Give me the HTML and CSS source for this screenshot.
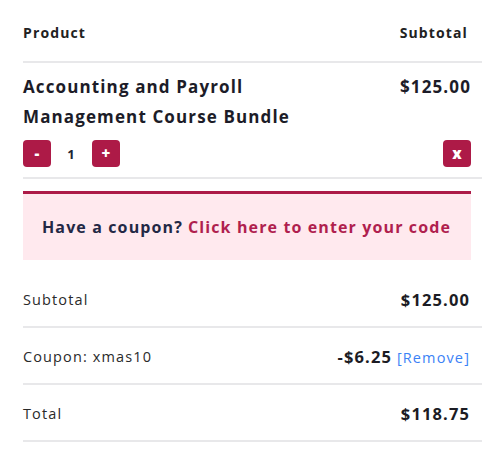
FILE: index.html
```html
<!DOCTYPE html>
<html>
	<head>
		<meta charset="UTF-8">
		<title>Cart</title>
		<link rel="stylesheet" href="styles.css">
	</head>
	<body>
		<div id="cart">
			<!--表头-->
			<div class="row head">
				<span>Product</span>
				<span class="right">Subtotal</span>
			</div>
			<!--商品-->
			<div class="item">
				<div class="item-top">
					<div class="item-name">Accounting and Payroll Management Course Bundle</div>
					<div class="item-price">$125.00</div>
				</div>
				<div class="item-ctrl">
					<div class="qty">
						<span class="btn">-</span>
						<span class="num">1</span>
						<span class="btn">+</span>
					</div>
					<span class="btn">x</span>
				</div>
			</div>
			<!--优惠券-->
			<div class="coupon">
				Have a coupon? <a href="#">Click here to enter your code</a>
			</div>
			<!--合计-->
			<div class="row total">
				<span>Subtotal</span>
				<span class="val">$125.00</span>
			</div>
			<div class="row total">
				<span>Coupon: xmas10</span>
				<span><b class="val">-$6.25</b> <a class="remove" href="#">[Remove]</a></span>
			</div>
			<div class="row total">
				<span>Total</span>
				<span class="val">$118.75</span>
			</div>
		</div>
	</body>
</html>
```

FILE: styles.css
```css
* {
	margin: 0;
	padding: 0;
	box-sizing: border-box;
}

body {
	background: #fff;
	font-family: "Open Sans", "Noto Sans", sans-serif;
	letter-spacing: 0.07em;
	color: #1d2433;
}

#cart {
	width: 459px;
	margin-left: 23px;
}

.row {
	display: flex;
	justify-content: space-between;
	align-items: center;
	border-bottom: 2px solid #e8e8ea;
}

.head {
	height: 63px;
	padding: 4px 14px 0 0;
	font-size: 14px;
	font-weight: 700;
	color: #222;
}

.item {
	padding: 9px 11px 10px 0;
	border-bottom: 2px solid #e8e8ea;
}

.item-top {
	display: flex;
	justify-content: space-between;
}

.item-name {
	width: 300px;
	font-size: 17px;
	font-weight: 700;
	line-height: 30px;
	color: #1c1c28;
}

.item-price {
	font-size: 17px;
	font-weight: 700;
	line-height: 30px;
	color: #1c1c28;
}

.item-ctrl {
	display: flex;
	justify-content: space-between;
	align-items: center;
	margin-top: 8px;
}

.qty {
	display: flex;
	align-items: center;
}

.btn {
	display: flex;
	align-items: center;
	justify-content: center;
	width: 28px;
	height: 27px;
	border-radius: 4px;
	background: #ad1a47;
	color: #fff;
	font-size: 15px;
	font-weight: 800;
	letter-spacing: 0;
	line-height: 1;
}

.num {
	width: 41px;
	text-align: center;
	font-size: 13px;
	font-weight: 700;
}

.coupon {
	width: 448px;
	height: 69px;
	margin: 12px 0 11px;
	padding-left: 19px;
	display: flex;
	align-items: center;
	background: #ffe9ee;
	border-top: 3px solid #ad1a47;
	font-size: 16px;
	font-weight: 700;
	color: #232845;
}

.coupon a {
	margin-left: 5px;
	color: #b01f4e;
	text-decoration: none;
}

.total {
	height: 57px;
	padding: 2px 12px 0 0;
	font-size: 14.5px;
	color: #2a2a2a;
}

.total:first-of-type {
	border-top: 2px solid #e8e8ea;
}

.val {
	font-size: 16.5px;
	font-weight: 700;
	color: #1c1c24;
}

.remove {
	font-size: 14.5px;
	color: #3b82f6;
	text-decoration: none;
}
```
